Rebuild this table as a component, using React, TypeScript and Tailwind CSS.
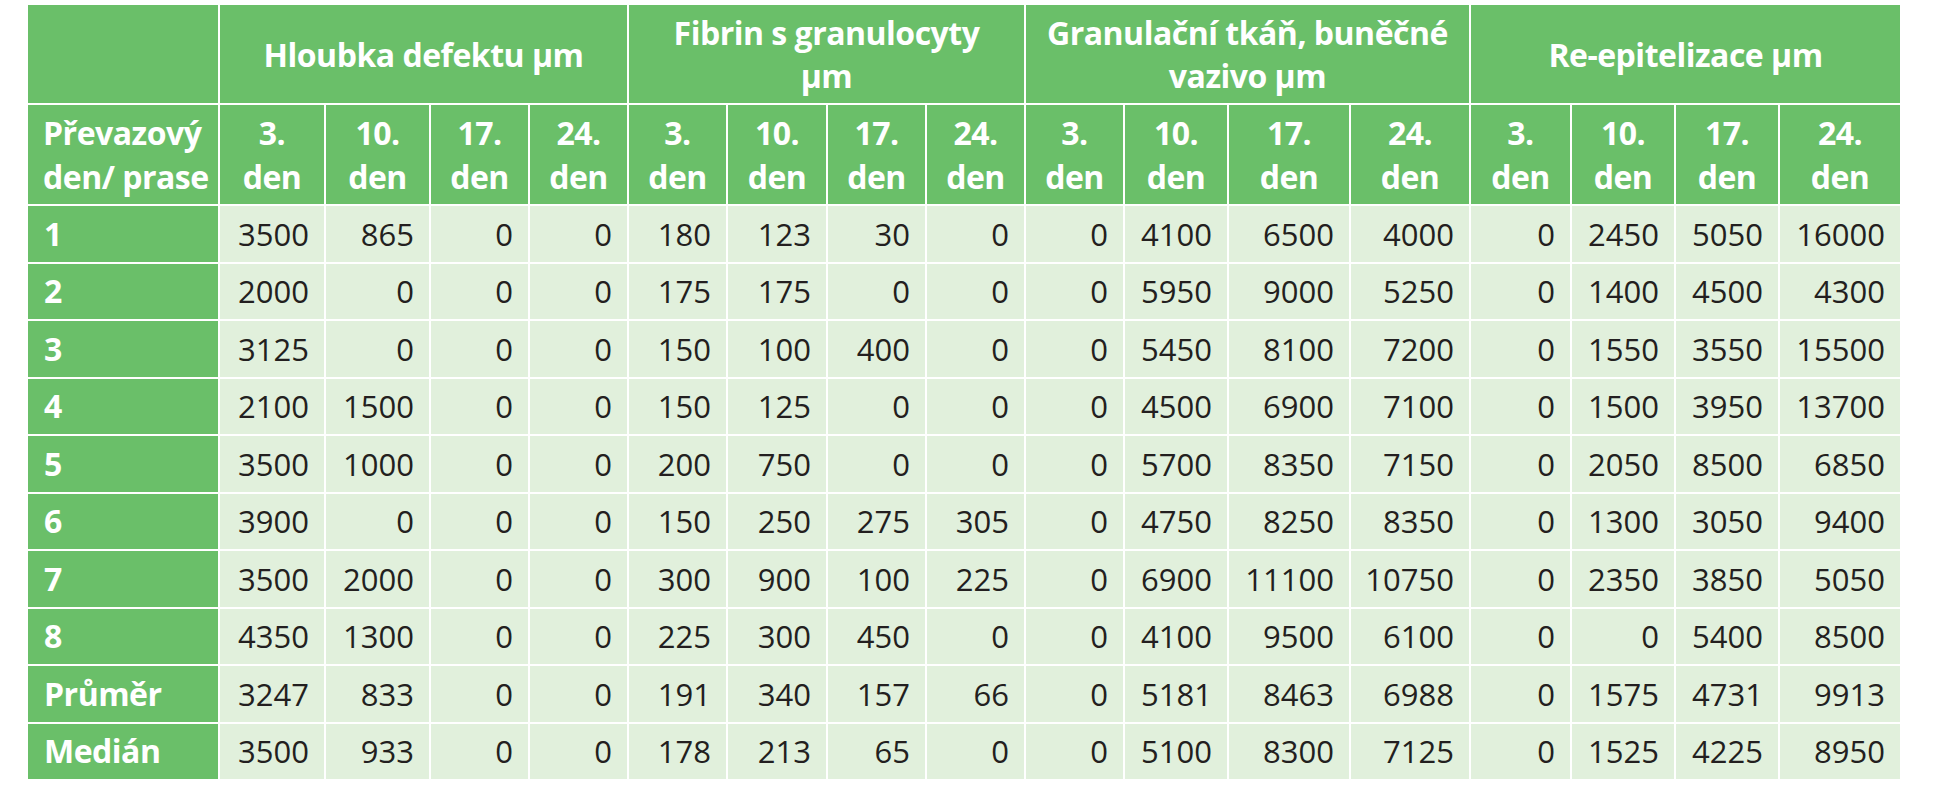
import React from "react";

const groups: React.ReactNode[] = [
  "Hloubka defektu µm",
  <>Fibrin s granulocyty<br />µm</>,
  <>Granulační tkáň, buněčné<br />vazivo µm</>,
  "Re-epitelizace µm",
];

const days = ["3.", "10.", "17.", "24."];

const rows: [string, number[]][] = [
  ["1", [3500, 865, 0, 0, 180, 123, 30, 0, 0, 4100, 6500, 4000, 0, 2450, 5050, 16000]],
  ["2", [2000, 0, 0, 0, 175, 175, 0, 0, 0, 5950, 9000, 5250, 0, 1400, 4500, 4300]],
  ["3", [3125, 0, 0, 0, 150, 100, 400, 0, 0, 5450, 8100, 7200, 0, 1550, 3550, 15500]],
  ["4", [2100, 1500, 0, 0, 150, 125, 0, 0, 0, 4500, 6900, 7100, 0, 1500, 3950, 13700]],
  ["5", [3500, 1000, 0, 0, 200, 750, 0, 0, 0, 5700, 8350, 7150, 0, 2050, 8500, 6850]],
  ["6", [3900, 0, 0, 0, 150, 250, 275, 305, 0, 4750, 8250, 8350, 0, 1300, 3050, 9400]],
  ["7", [3500, 2000, 0, 0, 300, 900, 100, 225, 0, 6900, 11100, 10750, 0, 2350, 3850, 5050]],
  ["8", [4350, 1300, 0, 0, 225, 300, 450, 0, 0, 4100, 9500, 6100, 0, 0, 5400, 8500]],
  ["Průměr", [3247, 833, 0, 0, 191, 340, 157, 66, 0, 5181, 8463, 6988, 0, 1575, 4731, 9913]],
  ["Medián", [3500, 933, 0, 0, 178, 213, 65, 0, 0, 5100, 8300, 7125, 0, 1525, 4225, 8950]],
];

const headFont = { fontFamily: '"Open Sans", "Noto Sans", sans-serif' };

export default function App() {
  return (
    <div className="w-[1953px] h-[800px] bg-white pt-[5px] pl-[28px]">
      <div
        className="grid w-[1872px] gap-[2px] bg-white grid-cols-[190px_104px_103px_97px_97px_97px_98px_97px_97px_97px_102px_120px_118px_99px_102px_102px_120px] grid-rows-[98px_99px_repeat(10,55.5px)]"
        style={headFont}
      >
        <div className="bg-[#6abf69]" />
        {groups.map((g, i) => (
          <div
            key={i}
            className="col-span-4 bg-[#6abf69] flex items-center justify-center text-center whitespace-nowrap text-white font-bold text-[32px] leading-[43px] tracking-[-0.5px]"
          >
            <span>{g}</span>
          </div>
        ))}
        <div className="bg-[#6abf69] flex items-center pl-[15px] whitespace-nowrap text-white font-bold text-[32px] leading-[44px] tracking-[-0.5px]">
          <span>
            Převazový
            <br />
            den/ prase
          </span>
        </div>
        {[0, 1, 2, 3].flatMap((gi) =>
          days.map((d) => (
            <div
              key={`${gi}-${d}`}
              className="bg-[#6abf69] flex flex-col items-center justify-center text-white font-bold text-[32px] leading-[44px] tracking-[-0.5px]"
            >
              <span>{d}</span>
              <span>den</span>
            </div>
          ))
        )}
        {rows.map(([label, vals]) => (
          <React.Fragment key={label}>
            <div className="bg-[#6abf69] flex items-center pl-[16px] text-white font-bold text-[32px] tracking-[-0.5px]">
              {label}
            </div>
            {vals.map((v, i) => (
              <div
                key={i}
                className="bg-[#e1f0dc] flex items-center justify-end pr-[15px] text-[#231f20] text-[31px]"
              >
                {v}
              </div>
            ))}
          </React.Fragment>
        ))}
      </div>
    </div>
  );
}
